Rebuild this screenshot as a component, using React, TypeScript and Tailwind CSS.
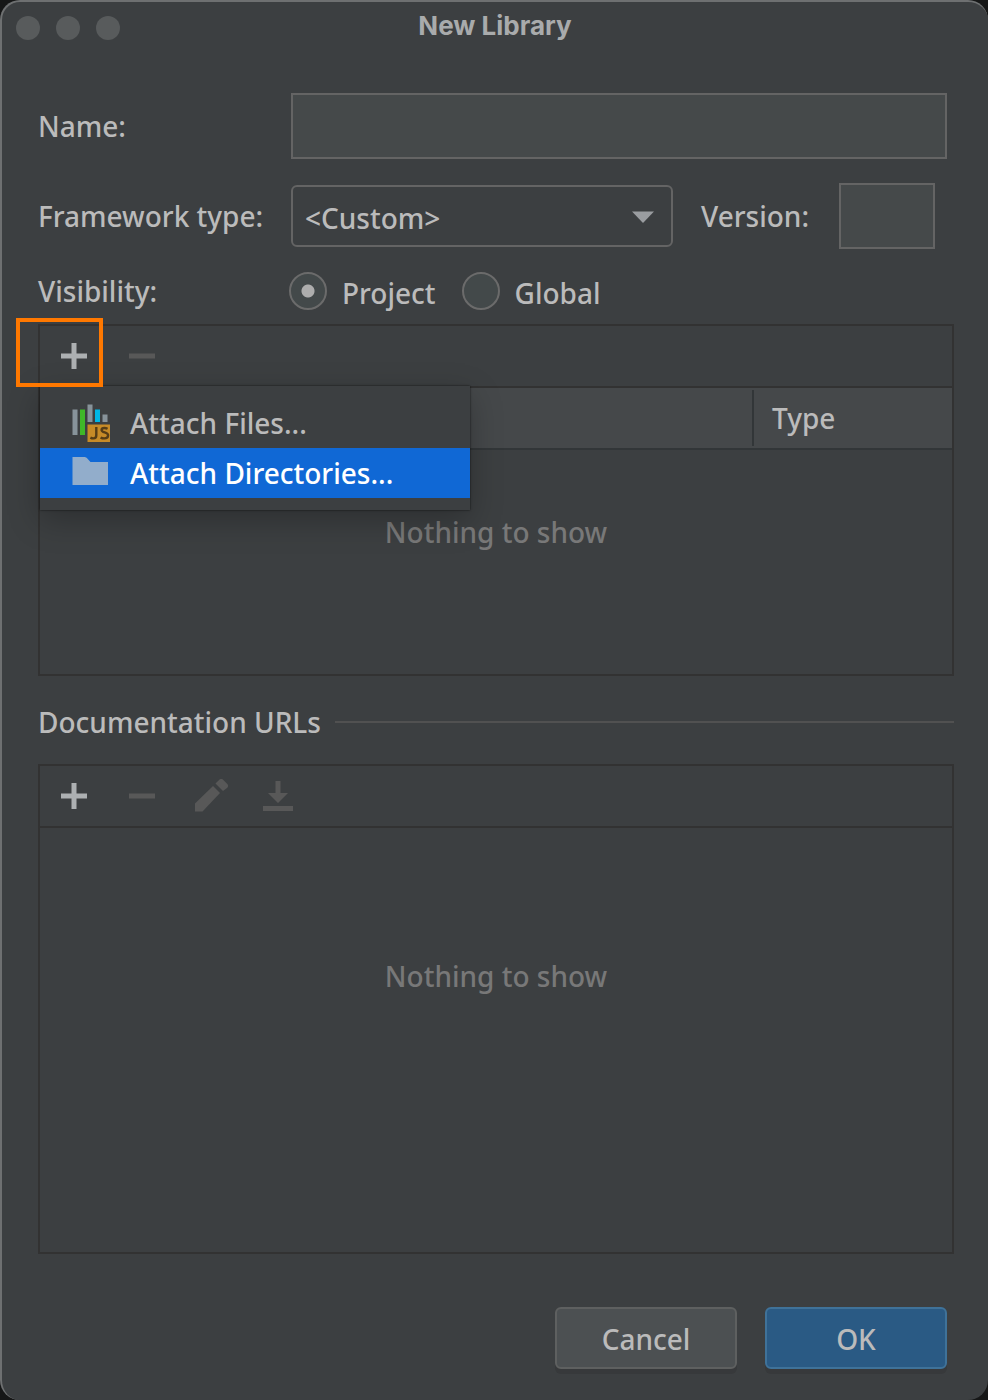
import { useState, type ReactNode } from "react";
import clsx from "clsx";

function PlusIcon() {
  return (
    <svg width="26" height="26" viewBox="0 0 26 26" fill="#adb0b2" aria-hidden="true">
      <path d="M10.5 0h5v10.5H26v5H15.5V26h-5V15.5H0v-5h10.5z" />
    </svg>
  );
}

function MinusIcon() {
  return (
    <svg width="26" height="26" viewBox="0 0 26 26" fill="#585858" aria-hidden="true">
      <path d="M0 10.5h26v5H0z" />
    </svg>
  );
}

function PencilIcon() {
  return (
    <svg width="38" height="34" viewBox="0 0 38 34" fill="#585858" aria-hidden="true">
      <path d="M4 24.5 22 7l7 7L11.5 32.5H4z" />
      <path d="M24.500 4.500l3.800-3.800c1.200-1.100 2.600-1.100 3.800 0l4.200 4.200c1.100 1.200 1.100 2.600 0 3.800L32 12z" />
    </svg>
  );
}

function ImportIcon() {
  return (
    <svg width="30" height="30" viewBox="0 0 30 30" fill="#585858" aria-hidden="true">
      <path d="M12.5 0h5v12H25L15 22 5 12h7.5zM0 25h30v5H0z" />
    </svg>
  );
}

function LibraryJsIcon() {
  return (
    <svg width="38" height="38" viewBox="0 0 38 38" aria-hidden="true">
      <g fill="#87939a">
        <path d="M.5 5.5h5V31h-5zM15.5.5h5V18h-5zM30.5 10.5h5V18h-5z" />
      </g>
      <path d="M8 5.5h5V31H8z" fill="#3fb828" />
      <path d="M23 5.5h5V18h-5z" fill="#00b7e6" />
      <path d="M15.5 20.5H38V38H15.5z" fill="#c78b27" />
      <g fill="none" stroke="#563d16" strokeWidth="2.4">
        <path d="M24.3 23v8.2c0 2.3-1 3.2-2.9 3.2-1.1 0-2.1-.3-3-.8" />
        <path d="M35.6 24.8c-1-.5-2-.8-3.2-.8-1.7 0-2.8.8-2.8 2 0 3.100 6.500 1.800 6.500 5.300 0 1.900-1.600 3.100-3.800 3.100-1.300 0-2.600-.3-3.700-1" />
      </g>
    </svg>
  );
}

function FolderIcon() {
  return (
    <svg width="38" height="38" viewBox="0 0 38 38" fill="#92adcb" aria-hidden="true">
      <path d="M.5 3H12c1.5 0 2.5.5 3.3 1.5L18.5 8H36v23H.5z" />
    </svg>
  );
}

function ToolButton({ label, disabled, children }: { label: string; disabled?: boolean; children: ReactNode }) {
  return (
    <button type="button" aria-label={label} disabled={disabled} className="flex h-15 w-17 items-center justify-center">
      {children}
    </button>
  );
}

function Radio({ label, checked, onSelect }: { label: string; checked: boolean; onSelect: () => void }) {
  return (
    <label className="flex items-center gap-[15px]">
      <input
        type="radio"
        name="visibility"
        checked={checked}
        onChange={onSelect}
        className="size-[38px] appearance-none rounded-full border-2 border-[#6b6b6b] bg-[#43494a] checked:bg-[radial-gradient(circle,#adadad_6px,#43494a_7px)]"
      />
      <span className="pt-1">{label}</span>
    </label>
  );
}

function MenuItem({ icon, active, children }: { icon: ReactNode; active?: boolean; children: ReactNode }) {
  return (
    <button
      type="button"
      role="menuitem"
      className={clsx("flex h-[50px] w-full items-center gap-5 pl-8 text-left", active && "bg-[#1068d5] text-white")}
    >
      {icon}
      {children}
    </button>
  );
}

export default function App() {
  const [visibility, setVisibility] = useState("Project");

  return (
    <div className="min-h-screen bg-[#161717]">
      <main className="flex min-h-screen flex-col rounded-[20px] border-t-2 border-l-2 border-[#6e7071] bg-[#3c3f41] pb-[31px] font-['Noto_Sans',sans-serif] text-[28px] leading-9 font-medium text-[#bbbbbb]">
        <header className="grid h-[52px] grid-cols-[1fr_auto_1fr] items-center px-3.5">
          <div className="flex gap-4">
            <span className="size-6 rounded-full bg-[#585b5c]" />
            <span className="size-6 rounded-full bg-[#585b5c]" />
            <span className="size-6 rounded-full bg-[#585b5c]" />
          </div>
          <h1 className="pb-1 font-['Inter',sans-serif] text-[26px] font-bold text-[#a9abac]">New Library</h1>
        </header>

        <form className="flex flex-1 flex-col pt-[39px] pr-[34px] pl-9" onSubmit={(e) => e.preventDefault()}>
          <div className="flex items-center pr-[7px]">
            <label htmlFor="name" className="w-[253px] shrink-0">Name:</label>
            <input id="name" type="text" className="h-[66px] min-w-0 flex-1 border-2 border-[#646464] bg-[#45494a] px-3 outline-none" />
          </div>

          <div className="mt-6 flex items-center pr-[19px]">
            <label htmlFor="framework" className="w-[253px] shrink-0">Framework type:</label>
            <div className="grid min-w-0 flex-1 items-center">
              <select
                id="framework"
                className="col-start-1 row-start-1 h-[62px] w-full appearance-none rounded-md border-2 border-[#646464] bg-[#3c3f41] pt-1 pl-3 outline-none"
              >
                <option>&lt;Custom&gt;</option>
              </select>
              <svg width="22" height="14" viewBox="0 0 22 14" fill="#9a9da0" className="pointer-events-none col-start-1 row-start-1 mr-[19px] justify-self-end" aria-hidden="true">
                <path d="M0 2.500h22L11 14z" />
              </svg>
            </div>
            <label htmlFor="version" className="ml-7 w-[138px] shrink-0">Version:</label>
            <input id="version" type="text" className="h-[66px] w-24 border-2 border-[#646464] bg-[#45494a] px-3 outline-none" />
          </div>

          <fieldset className="mt-[22px] flex items-center" aria-labelledby="visibility">
            <span id="visibility" className="w-[251px] shrink-0">Visibility:</span>
            <div className="flex gap-[26px]">
              <Radio label="Project" checked={visibility === "Project"} onSelect={() => setVisibility("Project")} />
              <Radio label="Global" checked={visibility === "Global"} onSelect={() => setVisibility("Global")} />
            </div>
          </fieldset>

          <section className="relative mt-[13px] h-[352px] border-2 border-[#323232]">
            <div className="flex h-[62px] border-b-2 border-[#323232]">
              <ToolButton label="Add"><PlusIcon /></ToolButton>
              <ToolButton label="Remove" disabled><MinusIcon /></ToolButton>
            </div>
            <table className="w-full border-separate border-spacing-0">
              <thead>
                <tr className="h-[62px] bg-[#45484a] text-left">
                  <td className="border-b-2 border-[#323638]" />
                  <th className="w-[200px] border-b-2 border-[#323638] p-0 font-medium">
                    <div className="flex h-14 items-center border-l-2 border-[#323638] pl-[18px]">Type</div>
                  </th>
                </tr>
              </thead>
              <tbody>
                <tr>
                  <td colSpan={2} className="pt-16 text-center text-[#787878]">Nothing to show</td>
                </tr>
              </tbody>
            </table>

            <div role="menu" className="absolute top-15 left-0 w-[430px] bg-[#3c3f41] py-3 shadow-[0_0_2px_rgba(0,0,0,0.7),0_10px_30px_rgba(0,0,0,0.25)]">
              <MenuItem icon={<LibraryJsIcon />}>Attach Files...</MenuItem>
              <MenuItem icon={<FolderIcon />} active>Attach Directories...</MenuItem>
            </div>
            <div className="pointer-events-none absolute -top-2 -left-6 h-[69px] w-[87px] border-4 border-[#ff7800]" />
          </section>

          <div className="mt-7 flex items-center gap-3.5">
            <h2>Documentation URLs</h2>
            <div className="h-0.5 flex-1 bg-[#515151]" />
          </div>

          <section className="mt-6 flex-1 border-2 border-[#323232]">
            <div className="flex h-[62px] border-b-2 border-[#323232]">
              <ToolButton label="Add URL"><PlusIcon /></ToolButton>
              <ToolButton label="Remove URL" disabled><MinusIcon /></ToolButton>
              <ToolButton label="Edit URL" disabled><PencilIcon /></ToolButton>
              <ToolButton label="Specify URL" disabled><ImportIcon /></ToolButton>
            </div>
            <p className="pt-[130px] text-center text-[#787878]">Nothing to show</p>
          </section>

          <footer className="mt-[53px] flex justify-end gap-7 pr-[7px]">
            <button type="button" className="h-[62px] w-[182px] rounded-md border-2 border-[#5e6060] bg-[#4c5052] pt-0.5 shadow-[0_5px_0_#37393b]">Cancel</button>
            <button type="submit" className="h-[62px] w-[182px] rounded-md border-2 border-[#3f7299] bg-[#2a5a84] pt-0.5 shadow-[0_5px_0_#37393b]">OK</button>
          </footer>
        </form>
      </main>
    </div>
  );
}
